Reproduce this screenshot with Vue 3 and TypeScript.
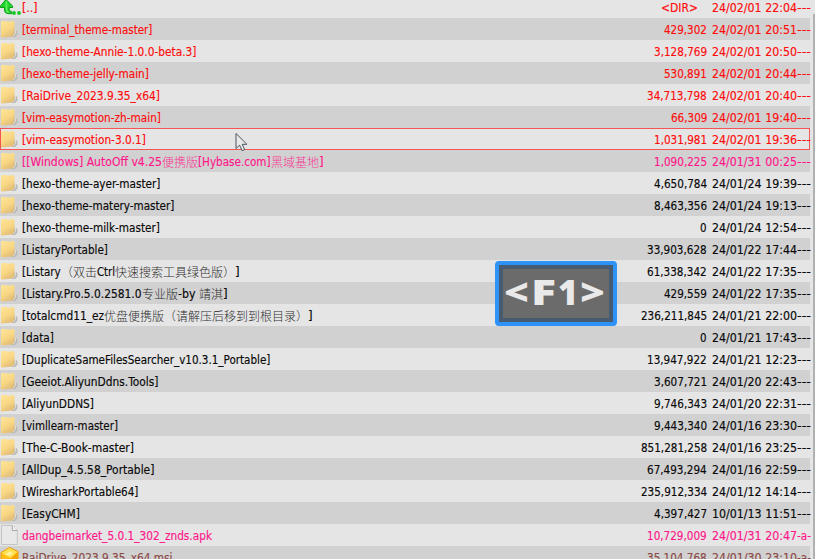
<script setup lang="ts">
import type { Directive } from 'vue'

interface Run { text: string; width: number; cjk?: boolean }
interface Row {
  name: Run[]
  size: string
  date: string
  attr: string
  tone: 'red' | 'pink' | 'black' | 'brown'
  icon: 'up' | 'folder' | 'file' | 'msi'
  focused?: boolean
}

const row = (
  name: string | Run[], width: number, size: string, date: string,
  tone: Row['tone'] = 'black', icon: Row['icon'] = 'folder', attr = '---', focused = false,
): Row => ({
  name: typeof name === 'string' ? [{ text: name, width: width - 0.6 }] : name,
  size, date, attr, tone, icon, focused,
})
const l = (text: string, width: number): Run => ({ text, width })
const c = (text: string): Run => ({ text, width: text.length * 12, cjk: true })

const rows: Row[] = [
  row('[..]', 16, '<DIR>', '24/02/01 22:04', 'red', 'up'),
  row('[terminal_theme-master]', 131, '429,302', '24/02/01 20:51', 'red'),
  row('[hexo-theme-Annie-1.0.0-beta.3]', 175, '3,128,769', '24/02/01 20:50', 'red'),
  row('[hexo-theme-jelly-main]', 127.5, '530,891', '24/02/01 20:44', 'red'),
  row('[RaiDrive_2023.9.35_x64]', 138.5, '34,713,798', '24/02/01 20:40', 'red'),
  row('[vim-easymotion-zh-main]', 139.5, '66,309', '24/02/01 19:40', 'red'),
  row('[vim-easymotion-3.0.1]', 124.5, '1,031,981', '24/02/01 19:36', 'red', 'folder', '---', true),
  row([l('[[Windows] AutoOff v4.25', 140), c('便携版'), l('[Hybase.com]', 72.5), c('黑域基地'), l(']', 4.6)],
    0, '1,090,225', '24/01/31 00:25', 'pink'),
  row('[hexo-theme-ayer-master]', 139, '4,650,784', '24/01/24 19:39'),
  row('[hexo-theme-matery-master]', 153, '8,463,356', '24/01/24 19:13'),
  row('[hexo-theme-milk-master]', 138.5, '0', '24/01/24 12:54'),
  row('[ListaryPortable]', 86.5, '33,903,628', '24/01/22 17:44'),
  row([l('[Listary', 38.7), c('（双击'), l('Ctrl', 18), c('快速搜索工具绿色版）'), l(']', 4.6)],
    0, '61,338,342', '24/01/22 17:35'),
  row([l('[Listary.Pro.5.0.2581.0', 119.5), c('专业版'), l('-by ', 21), c('靖淇'), l(']', 4.6)],
    0, '429,559', '24/01/22 17:35'),
  row([l('[totalcmd11_ez', 82), c('优盘便携版（请解压后移到到根目录）'), l(']', 4.6)],
    0, '236,211,845', '24/01/21 22:00'),
  row('[data]', 32.5, '0', '24/01/21 17:43'),
  row('[DuplicateSameFilesSearcher_v10.3.1_Portable]', 249, '13,947,922', '24/01/21 12:23'),
  row('[Geeiot.AliyunDdns.Tools]', 137, '3,607,721', '24/01/20 22:43'),
  row('[AliyunDDNS]', 72.5, '9,746,343', '24/01/20 22:31'),
  row('[vimllearn-master]', 96.5, '9,443,340', '24/01/16 23:30'),
  row('[The-C-Book-master]', 112.5, '851,281,258', '24/01/16 23:25'),
  row('[AllDup_4.5.58_Portable]', 133, '67,493,294', '24/01/16 22:59'),
  row('[WiresharkPortable64]', 117, '235,912,334', '24/01/12 14:14'),
  row('[EasyCHM]', 58.5, '4,397,427', '10/01/13 11:51'),
  row('dangbeimarket_5.0.1_302_znds.apk', 190.6, '10,729,009', '24/01/31 20:47', 'pink', 'file', '-a-'),
  row('RaiDrive_2023.9.35_x64.msi', 151, '35,104,768', '24/01/30 23:10', 'brown', 'msi', '-a-'),
]

const keys: Run[] = [l('<', 25), l('F', 25), l('1', 20), l('>', 25)]

const sizeWidth = (s: string): number =>
  s === '<DIR>' ? 37 : [...s].reduce((w, ch) => w + (ch === ',' ? 3.64 : 6.55), 0)

// Condenses a run horizontally so that it fills its column width exactly.
const vFit: Directive<HTMLElement, number> = {
  mounted(el, { value }) {
    const inner = el.firstElementChild as HTMLElement
    el.style.width = `${value}px`
    inner.style.transform = `scaleX(${value / inner.getBoundingClientRect().width})`
  },
}
</script>

<template>
  <main class="panel">
    <div class="list">
      <div v-for="(r, i) in rows" :key="i" class="row" :class="[r.tone, { focused: r.focused }]">
        <span class="icon">
          <svg v-if="r.icon === 'folder'" width="20" height="22" viewBox="0 0 20 22">
            <path d="M13 12.500 16.500 12l1 2v2.500L15 19h-3z" fill="#b9b9b7" />
            <path d="M15.500 12v3.500L13 18" fill="none" stroke="#dededc" />
            <path d="M1 4 2 3h4.500l1 .7 6-.7 1 1.200V15.500L12.500 18.500 1.600 19.500 1 19z" fill="url(#folder)" />
          </svg>
          <svg v-else-if="r.icon === 'up'" width="22" height="22" viewBox="0 0 22 22">
            <path d="M6 3.500 12.600 10v1.500H9.200v3.200l2.500 1v2H8q-3.500-.5-3.500-3.700v-2.500H.5V10z" fill="#22d62b" stroke="#079d16" />
            <path d="M6.500 5.500v8q0 2 2 3" stroke="#62f262" stroke-width="1.500" fill="none" />
            <circle cx="14" cy="17" r="1.900" fill="#16c624" /><circle cx="19" cy="17" r="1.900" fill="#16c624" />
          </svg>
          <svg v-else-if="r.icon === 'file'" width="20" height="22" viewBox="0 0 20 22">
            <path d="M1.500 1.500h10.800l5 5v14H1.500z" fill="#e8e8e8" stroke="#c4c4c4" />
            <path d="M12.300 1.500v5h5" fill="#f3f3f3" stroke="#a5a5a5" />
          </svg>
          <svg v-else width="20" height="22" viewBox="0 0 20 22">
            <path d="M1 6.500 9.500 1.500 18 5.500V15l-8 6-9-5z" fill="#ffbd16" stroke="#e69b13" />
            <path d="M1.500 7 9.500 2l8 4L11 12z" fill="#ffe14d" /><path d="M11 12 17.500 6v9L10 21z" fill="#f7a300" />
            <path d="M5 8.500 10 5l3 2.500-3 2.500z" fill="#fff09b" />
          </svg>
        </span>
        <span class="name">
          <span v-for="(n, k) in r.name" :key="k" v-fit="n.width" class="run" :class="{ cjk: n.cjk }"><span>{{ n.text }}</span></span>
        </span>
        <span class="size" :class="{ dir: r.size === '<DIR>' }"><span v-fit="sizeWidth(r.size)" class="run"><span>{{ r.size }}</span></span></span>
        <span class="date"><span v-fit="85" class="run"><span>{{ r.date }}</span></span></span>
        <span class="attr"><span v-fit="14" class="run"><span>{{ r.attr }}</span></span></span>
      </div>
    </div>
    <div class="edge"></div>
    <div class="keycast"><span v-for="k in keys" :key="k.text" v-fit="k.width" class="run"><span>{{ k.text }}</span></span></div>
    <svg class="cursor" width="14" height="20" viewBox="0 0 14 20">
      <path d="M1 1.500v15l3.600-3.300 2.600 5.500 2.500-1.200-2.500-5.200h4.700z" fill="#e9e9e9" stroke="#4a535c" />
    </svg>
    <svg class="defs" width="0" height="0">
      <defs><linearGradient id="folder" x2=".5" y2="1">
        <stop stop-color="#ffe49a" /><stop offset=".6" stop-color="#f8d783" /><stop offset="1" stop-color="#e2bd78" />
      </linearGradient></defs>
    </svg>
  </main>
</template>

<style>
body { margin: 0; overflow: hidden; }
</style>

<style scoped>
.panel {
  position: relative;
  display: flex;
  width: 815px;
  height: 559px;
  overflow: hidden;
  background: #e5e5e5;
  font: 12px/24px "DejaVu Sans Condensed", "DejaVu Sans", "Noto Sans CJK SC", sans-serif;
  font-stretch: condensed;
}
.list { width: 811px; margin-top: -4px; flex: none; }
.row { display: flex; box-sizing: border-box; width: 810px; height: 22px; white-space: pre; -webkit-text-stroke: .15px; }
.row:nth-child(even) { background: #d1d1d1; }
.focused { box-shadow: inset 0 0 0 1px #f45454; }
.red { color: #fe0b0b; }
.pink { color: #ff168b; }
.black { color: #080808; }
.brown { color: #8b4a46; }
.icon { width: 22px; height: 22px; flex: none; }
.icon svg { display: block; }
.name { display: flex; flex: 1; }
.run { display: block; flex: none; height: 22px; }
.run > span { display: inline-block; transform-origin: 0 50%; white-space: pre; }
.cjk { font-family: "Noto Sans CJK SC", sans-serif; font-weight: 300; opacity: .85; -webkit-text-stroke: 0; }
.size { display: flex; justify-content: flex-end; width: 90px; }
.dir { box-sizing: border-box; padding-right: 9.5px; }
.date { width: 85px; margin-left: 5px; }
.attr { width: 14px; margin-right: -1px; }
.edge { width: 2px; margin: 14px 0 0 2px; background: #b1b1b1; }
.keycast {
  position: absolute;
  left: 495px;
  top: 261px;
  display: flex;
  gap: 2px;
  box-sizing: border-box;
  width: 122px;
  height: 65px;
  padding-left: 5px;
  border: 4px solid #2d93f8;
  border-radius: 4px;
  background: #6b6b6b;
  box-shadow: inset 0 0 0 4px #465a70;
  color: #e9e9e9;
  font: 800 36px/54px "Open Sans", sans-serif;
}
.cursor { position: absolute; left: 235px; top: 132px; }
.defs { position: absolute; }
</style>
